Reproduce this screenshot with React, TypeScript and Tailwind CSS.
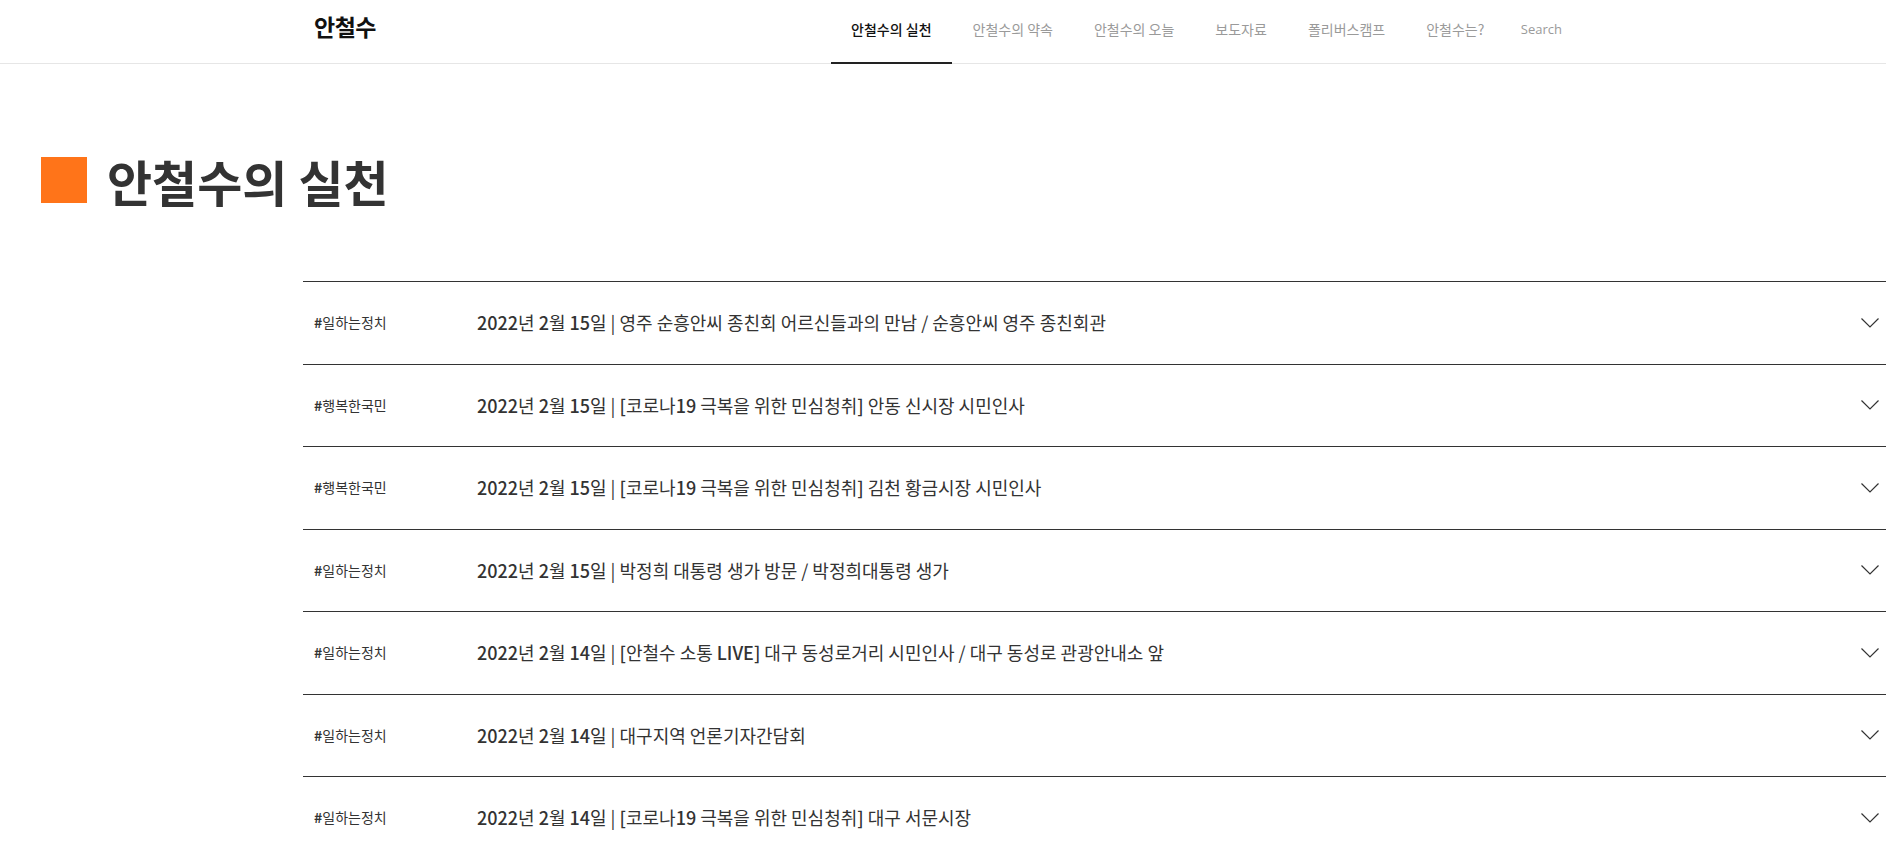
import React from "react";

interface Post {
  tag: string;
  title: string;
}

const navItems = ["안철수의 실천", "안철수의 약속", "안철수의 오늘", "보도자료", "폴리버스캠프", "안철수는?"];

const posts: Post[] = [
  { tag: "일하는정치", title: "2022년 2월 15일 | 영주 순흥안씨 종친회 어르신들과의 만남 / 순흥안씨 영주 종친회관" },
  { tag: "행복한국민", title: "2022년 2월 15일 | [코로나19 극복을 위한 민심청취] 안동 신시장 시민인사" },
  { tag: "행복한국민", title: "2022년 2월 15일 | [코로나19 극복을 위한 민심청취] 김천 황금시장 시민인사" },
  { tag: "일하는정치", title: "2022년 2월 15일 | 박정희 대통령 생가 방문 / 박정희대통령 생가" },
  { tag: "일하는정치", title: "2022년 2월 14일 | [안철수 소통 LIVE] 대구 동성로거리 시민인사 / 대구 동성로 관광안내소 앞" },
  { tag: "일하는정치", title: "2022년 2월 14일 | 대구지역 언론기자간담회" },
  { tag: "일하는정치", title: "2022년 2월 14일 | [코로나19 극복을 위한 민심청취] 대구 서문시장" },
  { tag: "행복한국민", title: "2022년 2월 13일 | [코로나19 극복을 위한 민심청취] 포항 죽도시장 시민인사" },
];

// latin runs (digits, brackets, LIVE) render a touch heavier, like the site's latin face
function Title({ text }: { text: string }) {
  const parts = text.split(/([A-Za-z0-9\[\]]+)/);
  return (
    <>
      {parts.map((p, i) =>
        i % 2 === 1 ? (
          <span key={i} className="font-medium">
            {p}
          </span>
        ) : (
          <span key={i}>{p}</span>
        )
      )}
    </>
  );
}

function Chevron() {
  return (
    <svg width="18" height="10" viewBox="0 0 18 10" fill="none" className="shrink-0">
      <polyline points="0.5,0.5 9,9 17.5,0.5" stroke="#333" strokeWidth="1.2" />
    </svg>
  );
}

export default function App() {
  return (
    <div
      className="h-[849px] overflow-hidden bg-white text-[#333]"
      style={{ fontFamily: '"Noto Sans CJK KR", "Noto Sans", sans-serif' }}
    >
      {/* header */}
      <header className="h-[64px] border-b border-[#e6e6e6]">
        <div className="w-[1258px] mx-auto h-full flex items-center">
          <div className="text-[23px] font-bold text-[#111] tracking-[-0.5px] pb-[10px]">안철수</div>
          <nav className="ml-auto flex h-full items-stretch">
            {navItems.map((item, i) => (
              <a
                key={item}
                href="#"
                className={
                  i === 0
                    ? "flex items-center px-[20.5px] pb-[4px] text-[14px] font-medium text-[#111] border-b-2 border-[#222] mb-[-1px]"
                    : "flex items-center px-[20.5px] pb-[4px] text-[14px] text-[#9a9a9a]"
                }
              >
                {item}
              </a>
            ))}
            <span
              className="flex items-center pl-4 pr-[10px] pb-[4px] text-[13px] text-[#9a9a9a]"
              style={{ fontFamily: '"Open Sans", sans-serif' }}
            >
              Search
            </span>
          </nav>
        </div>
      </header>

      {/* page title */}
      <div className="flex items-center pl-[41px] mt-[93px] h-[46px]">
        <div className="w-[46px] h-[46px] bg-[#ff7419]" />
        <h1 className="ml-[20px] text-[49px] font-bold leading-none text-[#333]">안철수의 실천</h1>
      </div>

      {/* post list */}
      <ul className="ml-[303px] mt-[78px] border-t border-[#333]">
        {posts.map((p, i) => (
          <li key={i} className="h-[82.5px] flex items-center border-b border-[#333] pl-[11px] pr-[7px]">
            <span className="w-[163px] shrink-0 text-[14px] text-[#333]">
              <span className="font-bold">#</span>
              {p.tag}
            </span>
            <span className="flex-1 text-[18px] text-[#333]">
              <Title text={p.title} />
            </span>
            <Chevron />
          </li>
        ))}
      </ul>
    </div>
  );
}
